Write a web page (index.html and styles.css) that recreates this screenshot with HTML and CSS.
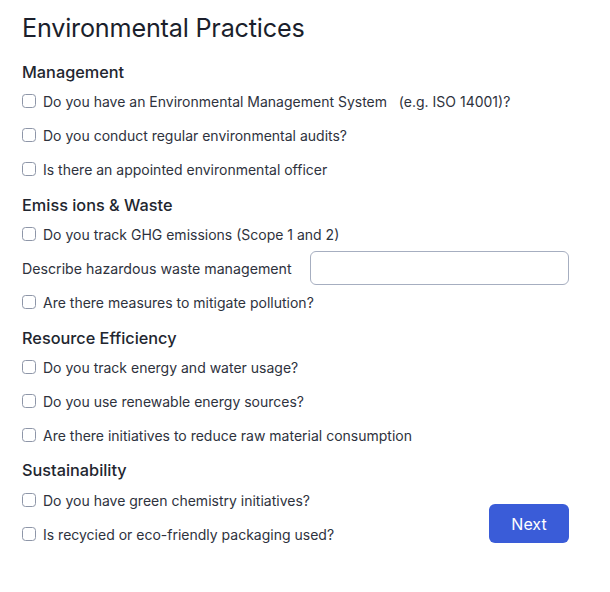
FILE: index.html
```html
<!DOCTYPE html>
<html lang="en">
<head>
<meta charset="utf-8">
<title>Environmental Practices</title>
<link rel="stylesheet" href="styles.css">
</head>
<body>
<main class="form">
  <h1 class="title">Environmental Practices</h1>

  <section class="section">
    <h2 class="heading">Management</h2>
    <label class="item"><span class="box"></span><span>Do you have an Environmental Management System&nbsp;&nbsp; (e.g. ISO 14001)?</span></label>
    <label class="item"><span class="box"></span><span>Do you conduct regular environmental audits?</span></label>
    <label class="item"><span class="box"></span><span>Is there an appointed environmental officer</span></label>
  </section>

  <section class="section">
    <h2 class="heading">Emiss ions &amp; Waste</h2>
    <label class="item"><span class="box"></span><span>Do you track GHG emissions (Scope 1 and 2)</span></label>
    <div class="field"><span>Describe hazardous waste management</span><span class="input"></span></div>
    <label class="item"><span class="box"></span><span>Are there measures to mitigate pollution?</span></label>
  </section>

  <section class="section">
    <h2 class="heading">Resource Efficiency</h2>
    <label class="item"><span class="box"></span><span>Do you track energy and water usage?</span></label>
    <label class="item"><span class="box"></span><span>Do you use renewable energy sources?</span></label>
    <label class="item"><span class="box"></span><span>Are there initiatives to reduce raw material consumption</span></label>
  </section>

  <section class="section last">
    <h2 class="heading">Sustainability</h2>
    <div class="split">
      <div class="items">
        <label class="item"><span class="box"></span><span>Do you have green chemistry initiatives?</span></label>
        <label class="item"><span class="box"></span><span>Is recycied or eco-friendly packaging used?</span></label>
      </div>
      <button class="next" type="button">Next</button>
    </div>
  </section>
</main>
</body>
</html>
```

FILE: styles.css
```css
* { box-sizing: border-box; }
html, body { margin: 0; padding: 0; background: #ffffff; }
body {
  font-family: Inter, "Noto Sans", "Liberation Sans", sans-serif;
  color: #2e323d;
}
.form {
  width: 547px;
  margin-left: 22px;
  padding-top: 12px;
}
.title {
  margin: 0 0 17px;
  font-size: 25.2px;
  line-height: 32px;
  font-weight: 400;
  color: #1b1f2c;
  letter-spacing: -0.2px;
}
.section { margin-top: 8px; }
.section:first-of-type { margin-top: 0; }
.heading {
  margin: 0 0 1px;
  font-size: 16.3px;
  line-height: 22px;
  font-weight: 500;
  color: #22262f;
}
.item {
  display: flex;
  align-items: center;
  height: 34px;
  font-size: 14px;
  gap: 7px;
}
.box {
  width: 14px;
  height: 14px;
  border: 1.5px solid #8e96a8;
  border-radius: 3.5px;
  flex: none;
}
.field {
  display: flex;
  align-items: center;
  justify-content: space-between;
  height: 34px;
  font-size: 14.2px;
}
.input {
  width: 259px;
  height: 34px;
  border: 1px solid #a6aec0;
  border-radius: 6px;
}
.last { margin-top: 7px; }
.last .heading { margin-bottom: 2px; }
.split {
  display: flex;
  justify-content: space-between;
}
.next {
  align-self: flex-end;
  width: 80px;
  height: 39px;
  margin-bottom: 8px;
  border: 0;
  border-radius: 6px;
  background: #3a5cd8;
  color: #ffffff;
  font-family: inherit;
  font-size: 16px;
  font-weight: 400;
}
```
